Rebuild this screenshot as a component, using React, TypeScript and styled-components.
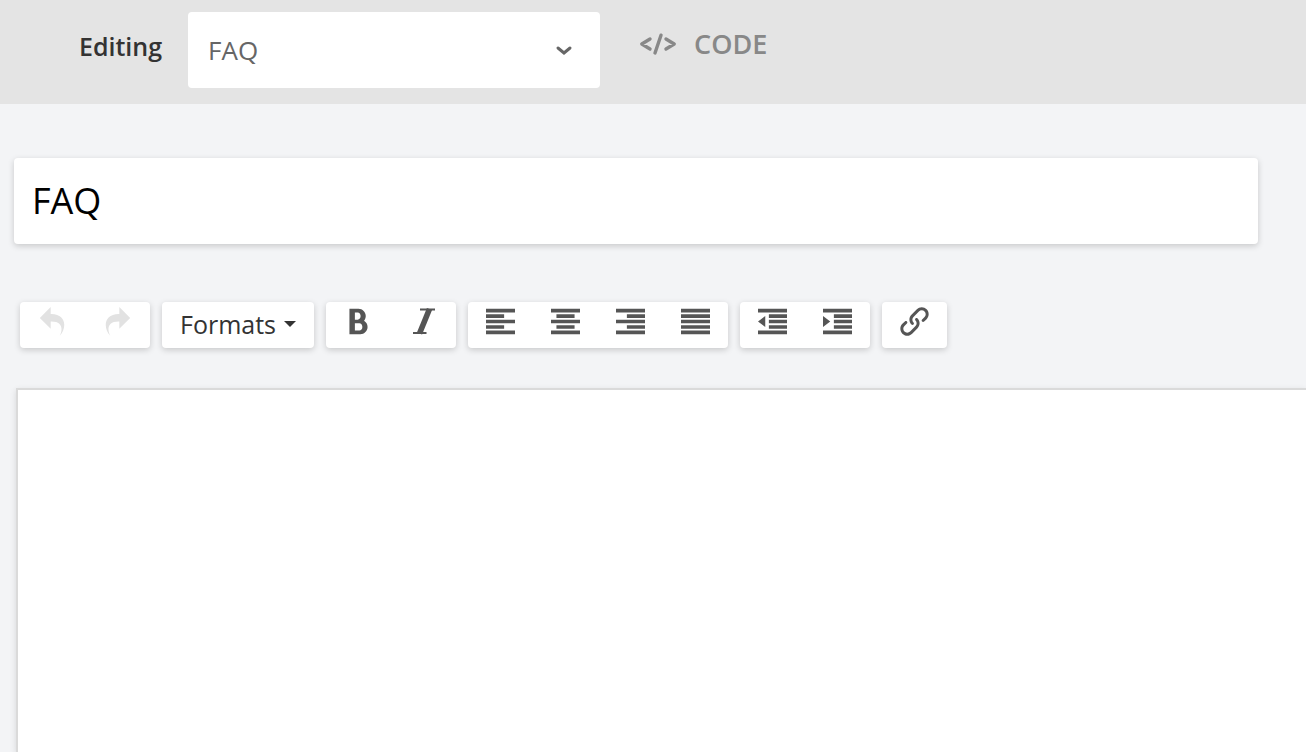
import React from "react";
import styled, { createGlobalStyle } from "styled-components";
import {
  ImBold,
  ImIndentDecrease,
  ImIndentIncrease,
  ImLink,
  ImParagraphCenter,
  ImParagraphJustify,
  ImParagraphLeft,
  ImParagraphRight,
  ImRedo2,
  ImUndo2,
} from "react-icons/im";

const GlobalStyle = createGlobalStyle`
  *, *::before, *::after { box-sizing: border-box; }
  body {
    margin: 0;
    background: #f3f4f6;
    color: #333;
    font-family: "Open Sans", "Noto Sans", sans-serif;
  }
  button, input, select, textarea { font: inherit; color: inherit; }
`;

const Page = styled.div`
  display: flex;
  flex-direction: column;
  min-height: 100vh;
`;

const Header = styled.header`
  display: flex;
  align-items: flex-start;
  padding: 12px 16px 16px 79px;
  background: #e4e4e4;
`;

const PageLabel = styled.label`
  margin-right: 26px;
  padding-top: 17px;
  font-size: 25px;
  font-weight: 600;
  line-height: 34px;
`;

const SelectBox = styled.div`
  display: grid;
  flex: 0 1 412px;
  align-items: center;

  > * { grid-area: 1 / 1; }
`;

const PageSelect = styled.select`
  appearance: none;
  width: 100%;
  height: 76px;
  padding: 0 60px 0 20px;
  border: 0;
  border-radius: 4px;
  background: #fff;
  color: #666;
  font-size: 26px;
`;

const Chevron = styled.svg`
  justify-self: end;
  margin-right: 26px;
  pointer-events: none;
`;

const CodeButton = styled.button`
  display: flex;
  align-items: center;
  gap: 17px;
  margin-left: 39px;
  padding: 14px 0;
  border: 0;
  background: none;
  color: #888;
  font-size: 27px;
  font-weight: 600;
  line-height: 36px;
`;

const TitleInput = styled.input`
  height: 86px;
  margin: 54px 48px 0 14px;
  padding: 0 18px 2px;
  border: 0;
  border-radius: 4px;
  background: #fff;
  color: #000;
  font-size: 36px;
  box-shadow: 0 2px 6px rgba(0, 0, 0, 0.18);
`;

const Toolbar = styled.div`
  display: flex;
  flex-wrap: wrap;
  gap: 12px;
  margin: 58px 20px 40px;
`;

const ButtonGroup = styled.div`
  display: flex;
  height: 46px;
  border-radius: 4px;
  background: #fff;
  box-shadow: 0 2px 6px rgba(0, 0, 0, 0.18);
`;

const IconButton = styled.button`
  display: flex;
  justify-content: center;
  width: 65px;
  padding: 5px 1px 0 0;
  border: 0;
  background: none;
  color: #555;
  font-size: 29px;

  &:disabled { color: #e2e2e2; }
`;

const FormatsButton = styled.button`
  display: flex;
  align-items: center;
  gap: 8px;
  padding: 0 18px 2px;
  border: 0;
  background: none;
  font-size: 25px;
  line-height: 44px;
`;

const Caret = styled.span`
  border: 6px solid transparent;
  border-top-color: #333;
  border-bottom: 0;
`;

const Editor = styled.textarea`
  flex: 1;
  min-height: 300px;
  margin-left: 16px;
  padding: 20px;
  border: 2px solid #dadada;
  border-right: 0;
  border-bottom: 0;
  outline: 0;
  background: #fff;
  font-size: 26px;
  resize: none;
  box-shadow: 0 2px 6px rgba(0, 0, 0, 0.12);
`;

function ItalicIcon() {
  return (
    <svg width="1em" height="1em" viewBox="0 0 29 29" fill="none" stroke="currentColor" aria-hidden="true">
      <path d="M11 2.500H26M4 26H17.500" strokeWidth="2" />
      <path d="M20.500 2L10.500 26.500" strokeWidth="5.600" />
    </svg>
  );
}

const toolGroups = {
  history: [
    { label: "Undo", Icon: ImUndo2, disabled: true },
    { label: "Redo", Icon: ImRedo2, disabled: true },
  ],
  style: [
    { label: "Bold", Icon: ImBold },
    { label: "Italic", Icon: ItalicIcon },
  ],
  align: [
    { label: "Align left", Icon: ImParagraphLeft },
    { label: "Align center", Icon: ImParagraphCenter },
    { label: "Align right", Icon: ImParagraphRight },
    { label: "Justify", Icon: ImParagraphJustify },
  ],
  indent: [
    { label: "Decrease indent", Icon: ImIndentDecrease },
    { label: "Increase indent", Icon: ImIndentIncrease },
  ],
  link: [{ label: "Insert link", Icon: ImLink }],
};

type Tool = {
  label: string;
  Icon: React.ComponentType;
  disabled?: boolean;
};

function ToolGroup({ tools }: { tools: Tool[] }) {
  return (
    <ButtonGroup role="group">
      {tools.map(({ label, Icon, disabled }) => (
        <IconButton key={label} type="button" aria-label={label} disabled={disabled}>
          <Icon />
        </IconButton>
      ))}
    </ButtonGroup>
  );
}

export default function App() {
  return (
    <Page>
      <GlobalStyle />
      <Header>
        <PageLabel htmlFor="page">Editing</PageLabel>
        <SelectBox>
          <PageSelect id="page" defaultValue="faq">
            <option value="faq">FAQ</option>
          </PageSelect>
          <Chevron width="20" height="12" viewBox="0 0 20 12" aria-hidden="true">
            <path
              d="M4 4l6 5 6-5"
              fill="none"
              stroke="#666"
              strokeWidth="3"
              strokeLinecap="round"
            />
          </Chevron>
        </SelectBox>
        <CodeButton type="button">
          <svg width="38" height="24" viewBox="0 0 38 24" aria-hidden="true">
            <g fill="none" stroke="currentColor" strokeWidth="3.4" strokeLinecap="round" strokeLinejoin="round">
              <path d="M11 7L2.800 12 11 17M27 7l8.200 5L27 17" />
              <path d="M22 3.200L16 21" />
            </g>
          </svg>
          CODE
        </CodeButton>
      </Header>
      <TitleInput aria-label="Page title" defaultValue="FAQ" />
      <Toolbar role="toolbar" aria-label="Formatting">
        <ToolGroup tools={toolGroups.history} />
        <ButtonGroup>
          <FormatsButton type="button" aria-haspopup="menu">
            Formats
            <Caret />
          </FormatsButton>
        </ButtonGroup>
        <ToolGroup tools={toolGroups.style} />
        <ToolGroup tools={toolGroups.align} />
        <ToolGroup tools={toolGroups.indent} />
        <ToolGroup tools={toolGroups.link} />
      </Toolbar>
      <Editor aria-label="Page content" />
    </Page>
  );
}
